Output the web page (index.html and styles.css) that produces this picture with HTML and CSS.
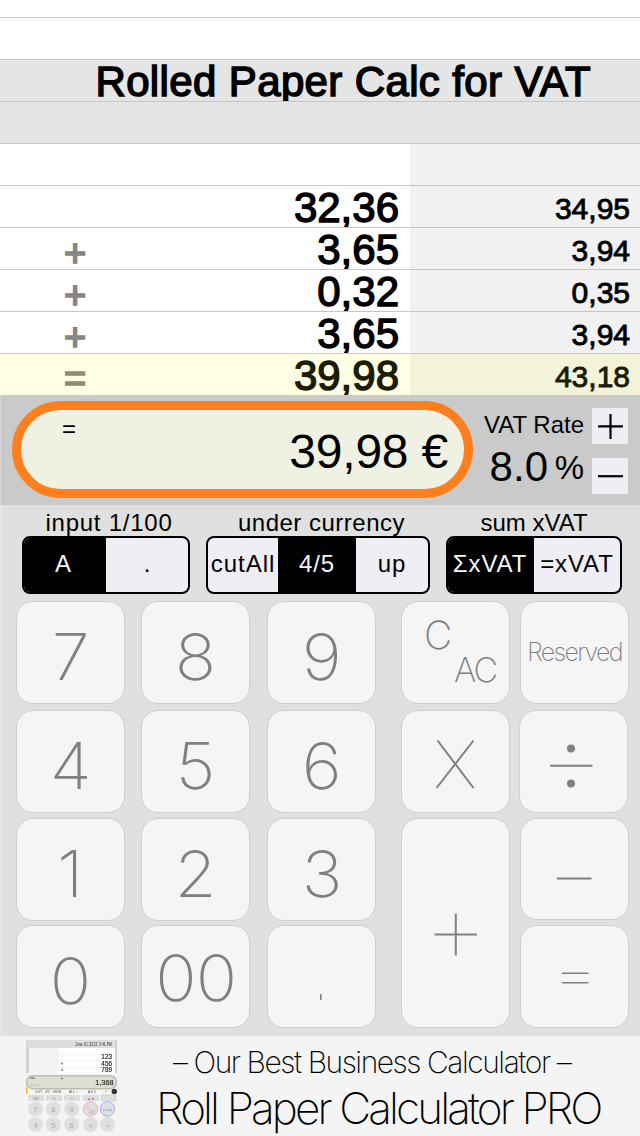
FILE: index.html
```html
<!DOCTYPE html>
<html lang="en">
<head>
<meta charset="utf-8">
<title>Rolled Paper Calc for VAT</title>
<link rel="stylesheet" href="styles.css">
</head>
<body>
<main class="app">
  <section class="paper">
    <div class="row row-cut"></div>
    <div class="row"></div>
    <div class="row head"><h1 class="title">Rolled Paper Calc for VAT</h1></div>
    <div class="row head"></div>
    <div class="row entry"><span class="op"></span><span class="net"></span><span class="gross"></span></div>
    <div class="row entry"><span class="op"></span><span class="net">32,36</span><span class="gross">34,95</span></div>
    <div class="row entry"><span class="op">+</span><span class="net">3,65</span><span class="gross">3,94</span></div>
    <div class="row entry"><span class="op">+</span><span class="net">0,32</span><span class="gross">0,35</span></div>
    <div class="row entry"><span class="op">+</span><span class="net">3,65</span><span class="gross">3,94</span></div>
    <div class="row entry total"><span class="op">=</span><span class="net">39,98</span><span class="gross">43,18</span></div>
  </section>

  <section class="display">
    <div class="pill"><span class="pill-op">=</span><span class="pill-value">39,98 €</span></div>
    <div class="rate">
      <div class="rate-label">VAT Rate</div>
      <div class="rate-value"><span>8.0</span><span class="percent">%</span></div>
    </div>
    <div class="steppers">
      <button class="step"><svg width="36" height="36"><path d="M6 18.3H31M18.5 6V31" stroke="#000" stroke-width="2.2"/></svg></button>
      <button class="step"><svg width="36" height="36"><path d="M6 18.2H31" stroke="#000" stroke-width="2.2"/></svg></button>
    </div>
  </section>

  <section class="pad">
    <div class="options">
      <div class="option input"><div class="option-label">input 1/100</div>
        <div class="seg"><span class="on">A</span><span>.</span></div></div>
      <div class="option under"><div class="option-label">under currency</div>
        <div class="seg"><span>cutAll</span><span class="on">4/5</span><span>up</span></div></div>
      <div class="option sum"><div class="option-label">sum xVAT</div>
        <div class="seg"><span class="on">ΣxVAT</span><span>=xVAT</span></div></div>
    </div>
    <div class="keys">
      <div class="grid digits">
        <button class="key"><span>7</span></button><button class="key"><span>8</span></button><button class="key"><span>9</span></button>
        <button class="key"><span>4</span></button><button class="key"><span>5</span></button><button class="key"><span>6</span></button>
        <button class="key"><span>1</span></button><button class="key"><span>2</span></button><button class="key"><span>3</span></button>
        <button class="key"><span>0</span></button><button class="key zeros"><span>00</span></button>
        <button class="key"><svg width="107" height="101"><path d="M52.8 68v6" stroke="#8a7a7a" stroke-width="1.6"/></svg></button>
      </div>
      <div class="grid ops">
        <button class="key clear"><b class="c">C</b><b class="ac">AC</b></button>
        <button class="key reserved">Reserved</button>
        <button class="key"><svg width="107" height="101"><path d="M35.5 29.5L71.5 77M71.5 29.5L34.5 77" /></svg></button>
        <button class="key divide"><svg width="107" height="101"><path d="M30 54.7H72.500"/><circle cx="51" cy="37.500" r="4"/><circle cx="51" cy="72.500" r="4"/></svg></button>
        <button class="key plus"><svg width="107" height="208"><path d="M32.500 115.500H75M53.800 94.500V136.500"/></svg></button>
        <button class="key minus"><svg width="107" height="100"><path d="M36 59.500H70.500"/></svg></button>
        <button class="key"><svg width="107" height="101"><path d="M41 47.300H67.500M41 56.800H67.500" class="fine"/></svg></button>
      </div>
    </div>
  </section>

  <footer class="banner">
    <svg class="thumb" width="92" height="96" viewBox="25 1040 92 96" font-family="Liberation Sans, Arial, sans-serif">
      <rect x="26" y="1040" width="91" height="33" fill="#d2d2d2"/>
      <rect x="27" y="1040" width="88" height="8" fill="#dddddd"/>
      <text x="75" y="1046.300" font-size="4.500" textLength="37" lengthAdjust="spacingAndGlyphs" fill="#333">June 10, 2013, 5:41 PM</text>
      <rect x="29" y="1048" width="86" height="26" fill="#fdfdfd"/>
      <path d="M29 1054.500H115M29 1061H115M29 1067.500H115M36 1048V1074M58 1048V1074" stroke="#e6e6e6" stroke-width=".5"/>
      <rect x="29" y="1048" width="29" height="26" fill="#f4f4f2"/>
      <g font-size="6.400" fill="#222" stroke="#222" stroke-width=".15" text-anchor="end"><text x="112" y="1059">123</text><text x="112" y="1065.500">456</text><text x="112" y="1072">789</text></g>
      <g fill="#777"><circle cx="62" cy="1063.500" r="1"/><circle cx="62" cy="1070" r="1"/></g>
      <rect x="26.500" y="1075.700" width="90" height="13" rx="6.500" fill="#dedfd3" stroke="#bbbcb4" stroke-width="1.500"/>
      <rect x="30" y="1077.300" width="5" height="1.500" fill="#888"/><circle cx="62" cy="1078.500" r="1" fill="#777"/>
      <text x="31" y="1086" font-size="4" fill="#bbb">Label</text>
      <text x="113.500" y="1084.500" font-size="7.300" text-anchor="end" fill="#222" stroke="#222" stroke-width=".15">1,368</text>
      <rect x="26" y="1087" width="1.500" height="7" fill="#f9b522"/>
      <g font-size="3.500" fill="#555"><text x="35" y="1093">CUT</text><text x="45" y="1093">4/5</text><text x="53" y="1093">HIDE</text><text x="69" y="1093">ALL ÷</text><text x="88" y="1093">A 0 2</text><text x="105" y="1093" fill="#f9b522">F</text></g>
      <circle cx="114.300" cy="1091.500" r="2.700" fill="#333"/>
      <g fill="#dedede"><rect x="28" y="1095" width="16" height="6" rx="1"/><rect x="46" y="1095" width="16" height="6" rx="1"/><rect x="64" y="1095" width="16" height="6" rx="1"/><rect x="83" y="1095" width="16" height="6" rx="1"/><rect x="101" y="1095" width="15" height="6" rx="1" stroke="#b5cdb5" stroke-width=".6"/></g>
      <g font-size="4" fill="#999" text-anchor="middle"><text x="36" y="1099.500">VAT</text><text x="54" y="1099.500">%</text><text x="72" y="1099.500" fill="#444">•</text><text x="91" y="1099.500" fill="#666">▴ ▾</text></g>
      <g fill="#dfdfdf"><circle cx="35.500" cy="1109" r="7.500"/><circle cx="53.500" cy="1109" r="7.500"/><circle cx="71.500" cy="1109" r="7.500"/><circle cx="90.500" cy="1109" r="7.200" stroke="#edb1b1"/><circle cx="107.500" cy="1109" r="7.200" stroke="#a9a9ef"/><circle cx="35.500" cy="1124.500" r="7.500"/><circle cx="53.500" cy="1124.500" r="7.500"/><circle cx="71.500" cy="1124.500" r="7.500"/><circle cx="90.500" cy="1124.500" r="7.500"/><circle cx="107.500" cy="1124.500" r="7.500"/></g>
      <g font-size="8" fill="#aaa" text-anchor="middle"><text x="35.500" y="1112">7</text><text x="53.500" y="1112">8</text><text x="71.500" y="1112">9</text><text x="35.500" y="1127.500">4</text><text x="53.500" y="1127.500">5</text><text x="71.500" y="1127.500">6</text><text x="90.500" y="1127.500">×</text><text x="107.500" y="1127.500">÷</text></g>
      <text x="86" y="1109" font-size="5" fill="#e59a9a">C</text><text x="89" y="1113.500" font-size="5" fill="#e59a9a">AC</text><text x="107.500" y="1110.500" font-size="3.500" text-anchor="middle" fill="#8c8cec">e-mail</text>
    </svg>
    <div class="promo">
      <div class="promo-top">– Our Best Business Calculator –</div>
      <div class="promo-name">Roll Paper Calculator PRO</div>
    </div>
  </footer>
</main>
</body>
</html>
```
FILE: styles.css
```css
* { box-sizing: border-box; }
body { margin: 0; background: #fff; }
.app { width: 640px; height: 1136px; overflow: hidden; display: flex; flex-direction: column; font-family: "Liberation Sans", Arial, sans-serif; color: #000; }
button { border: 0; padding: 0; margin: 0; font: inherit; color: inherit; }
svg { display: block; }

.paper { height: 395px; flex: none; }
.row { height: 42px; border-top: 1px solid #c6c6c8; line-height: 42px; overflow: hidden; white-space: nowrap; }
.row-cut { height: 17px; border-top: 0; }
.head { background: #e5e5e5; }
.title { margin: 0; padding-right: 49px; font-size: 42px; line-height: 43px; font-weight: 400; text-align: right; -webkit-text-stroke: 1.5px #000; letter-spacing: 0.37px; }
.entry { display: grid; grid-template-columns: 150px 260px 230px; }
.op { padding-top: 4px; text-align: center; font-size: 38px; color: #858585; -webkit-text-stroke: 1.7px #858585; }
.net { padding: 1px 11px 0 0; text-align: right; font-size: 42px; -webkit-text-stroke: 1.4px currentColor; }
.gross { height: 42px; padding: 1.5px 10px 0 0; text-align: right; font-size: 30px; background: #f1f1f1; -webkit-text-stroke: 0.9px currentColor; }
.total { background: #ffffe3; color: #1c1c02; }
.total .gross { background: #f3f3d9; }
.total .op { color: #8e8e76; -webkit-text-stroke-color: #8e8e76; }

.display { height: 110px; flex: none; background: #cacaca; border-left: 1px solid #d8d8d8; display: flex; padding: 6px 12px 0 11px; }
.pill { width: 461px; height: 97px; border: 9px solid #ff7f1f; border-radius: 49px; background: #eff2e3; display: flex; justify-content: space-between; padding: 0 16px 0 41px; }
.pill-op { font-size: 24px; line-height: 37px; }
.pill-value { font-size: 48px; line-height: 84px; letter-spacing: -.2px; }
.rate { width: 111px; text-align: right; padding-top: 9px; }
.rate-label { font-size: 24px; line-height: 30px; }
.rate-value { display: flex; justify-content: flex-end; font-size: 42px; line-height: 53px; gap: 6px; }
.percent { font-size: 33px; line-height: 56px; width: 30px; }
.steppers { display: flex; flex-direction: column; gap: 14px; padding: 7px 0 0 8px; }
.step { width: 36px; height: 36px; background: #efeef4; }

.pad { height: 531px; flex: none; background: #e0e0e0; border-left: 1px solid #e8e8e8; }
.options { height: 96px; display: flex; gap: 16px; padding: 4px 0 0 21px; font-size: 24px; }
.option-label { height: 27px; line-height: 28px; text-align: center; white-space: nowrap; }
.input { width: 168px; } .under { width: 224px; } .sum { width: 176px; }
.input .option-label { padding-left: 6px; letter-spacing: .75px; } .under .option-label { padding-left: 7px; letter-spacing: .5px; }
.seg { height: 58px; border: 2px solid #000; border-radius: 8px; background: #efeef4; display: flex; overflow: hidden; line-height: 51px; }
.seg span { flex: 1; text-align: center; white-space: nowrap; }
.seg .on { background: #000; color: #f4f4f8; }
.input .seg .on { flex: 0 0 82px; padding-right: 4px; }
.under .seg span { flex: 0 0 70px; letter-spacing: 1px; } .under .seg .on { flex-basis: 78px; letter-spacing: .8px; } .under .seg span:last-child { flex-basis: 72px; }
.sum .seg span { letter-spacing: .9px; } .sum .seg .on { flex: 0 0 86px; padding-right: 2px; }

.keys { display: flex; padding-left: 15px; gap: 25.500px; }
.grid { display: grid; grid-template-rows: 109px 108px 107px 103px; }
.digits { grid-template-columns: 125px 126px 108.500px; }
.ops { grid-template-columns: repeat(2, 109px); column-gap: 10px; }
.key { width: 109px; height: 103px; border: 1px solid #cfcfcf; border-radius: 17px; background: #f5f5f5; color: #808080; font-family: Inter, sans-serif; font-weight: 200; font-size: 64px; line-height: 109px; text-align: center; overflow: hidden; }
.key span { display: inline-block; transform: scaleX(1.07); }
.key b { font-weight: 200; }
.key svg { stroke: #808080; stroke-width: 2; fill: none; }
.key circle { fill: #808080; stroke: none; }
.key .fine { stroke-width: 1.600; }
.zeros { letter-spacing: -1px; line-height: 104px; }
.clear { display: flex; flex-direction: column; text-align: left; }
.c { font-size: 39px; line-height: 65px; padding-left: 22px; }
.ac { font-size: 34px; line-height: 34px; margin-top: -14px; padding-left: 52px; letter-spacing: -2px; }
.reserved { font-size: 25px; line-height: 99px; letter-spacing: -1.700px; }
.divide { margin-left: -1px; }
.plus { grid-row: 3 / 5; height: 210px; }
.minus { height: 102px; }

.banner { height: 100px; flex: none; background: #f4f4f4; display: flex; padding: 4px 0 0 25px; }
.thumb { flex: none; filter: blur(.4px); }
.promo { width: 523px; font-family: Inter, sans-serif; font-weight: 200; white-space: nowrap; }
.promo-top { padding-left: 56px; font-size: 30px; line-height: 44px; letter-spacing: -1.450px; }
.promo-name { padding-left: 39px; font-size: 44px; line-height: 48px; letter-spacing: -2.850px; }
```
